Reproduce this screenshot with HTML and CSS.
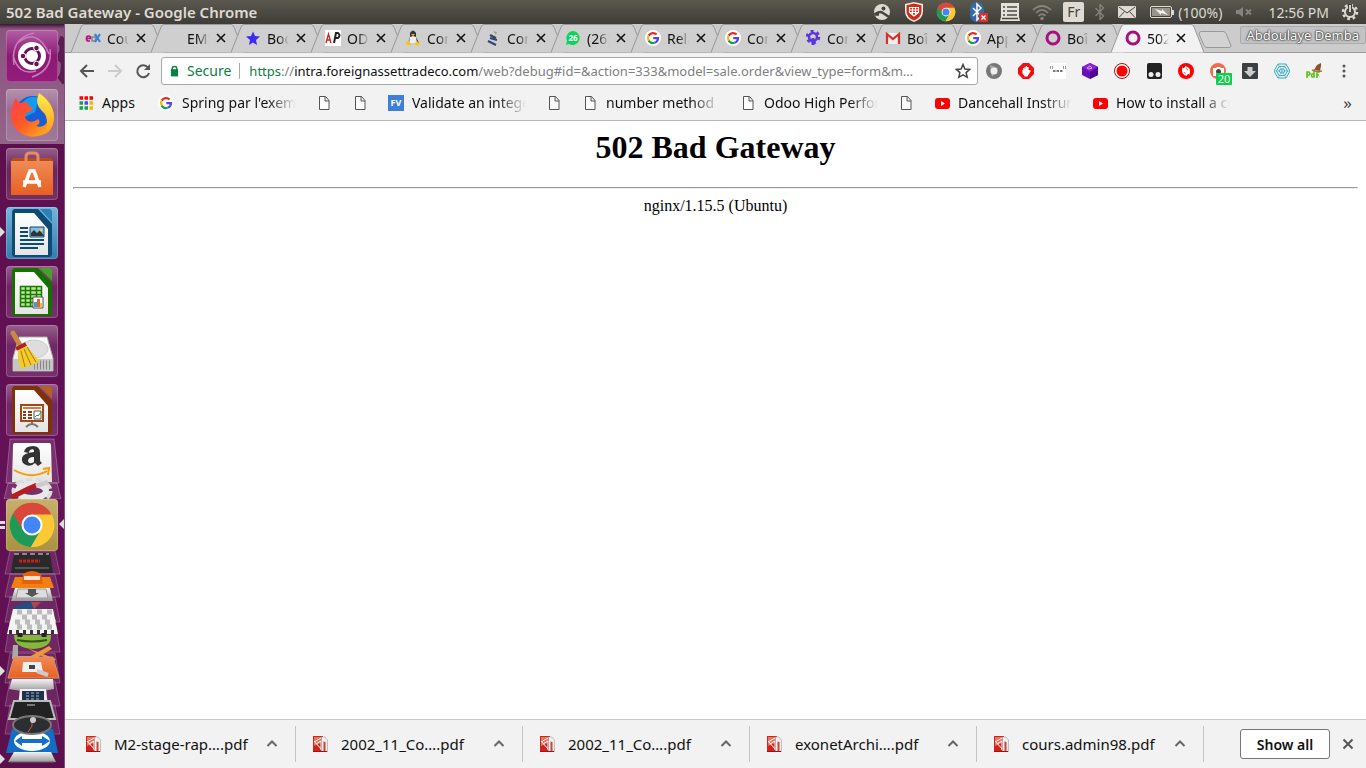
FILE: index.html
```html
<!DOCTYPE html>
<html lang="en">
<head>
<meta charset="utf-8">
<title>502 Bad Gateway</title>
<link rel="stylesheet" href="styles.css">
</head>
<body>
<svg class="sprite" width="0" height="0" aria-hidden="true">
  <linearGradient id="paper" x2="0" y2="1"><stop stop-color="#fff"/><stop offset="1" stop-color="#e4e4e4"/></linearGradient>
  <linearGradient id="silver" x2="0" y2="1"><stop stop-color="#f4f4f4"/><stop offset="1" stop-color="#999"/></linearGradient>
  <linearGradient id="orange" x2="0" y2="1"><stop stop-color="#f08a55"/><stop offset="1" stop-color="#e8601f"/></linearGradient>
  <linearGradient id="fire" x2="1" y2="1"><stop stop-color="#ff3a50"/><stop offset=".5" stop-color="#ff5a26"/><stop offset="1" stop-color="#ffc21e"/></linearGradient>
  <linearGradient id="flame" x2="0" y2="1"><stop stop-color="#fff04a"/><stop offset="1" stop-color="#ff9a1a"/></linearGradient>
  <symbol id="google" viewBox="0 0 16 16"><circle cx="8" cy="8" r="8" fill="#fff"/><g fill="none" stroke-width="2.200"><path d="M11.600 4.600A5 5 0 0 0 3.700 5.600" stroke="#ea2a1f"/><path d="M3.700 5.600A5 5 0 0 0 3.700 10.500" stroke="#fbb606"/><path d="M3.700 10.500A5 5 0 0 0 9.500 12.800" stroke="#13a052"/><path d="M9.500 12.800A5 5 0 0 0 13 8.200H8.300" stroke="#4f46f5"/></g></symbol>
  <symbol id="doc" viewBox="0 0 16 16"><path d="M3.500 1.500h6l3.500 4v9H3.500zM9 1.500V6h4" fill="#fff" stroke="#555"/></symbol>
  <symbol id="youtube" viewBox="0 0 16 16"><rect x="1" y="3" width="15" height="11" rx="3" fill="#f00"/><path d="M7 6l4 2.500L7 11z" fill="#fff"/></symbol>
  <symbol id="ring" viewBox="0 0 16 16"><circle cx="8" cy="8" r="6" fill="none" stroke="#a6117f" stroke-width="3"/></symbol>
  <symbol id="close" viewBox="0 0 12 12"><path d="M2 2l8 8M10 2l-8 8" stroke="currentColor" stroke-width="1.600" fill="none"/></symbol>
  <symbol id="tabshape" viewBox="0 0 94 29"><path d="M0 28.500L10 3Q11 .5 13 .5H80Q82 .5 83 3L93 28.500" fill="var(--tab)" stroke="#999"/></symbol>
  <symbol id="chrome" viewBox="0 0 48 48"><circle cx="24" cy="24" r="22" fill="#fcc934"/><path d="M24 24L5 12.500A22 22 0 0 0 23 46L33 29z" fill="#1d9a58"/><path d="M24 13H43.500A22 22 0 0 1 23 46L33 29z" fill="#fcc934"/><path d="M5 12.500A22 22 0 0 1 43.500 13.500H24L15 29z" fill="#d9483b"/><circle cx="24" cy="24" r="10.500" fill="#fff"/><circle cx="24" cy="24" r="8.500" fill="#4285f4"/></symbol>
  <symbol id="pdf" viewBox="0 0 16 16"><path d="M0 0h10v16H0z" fill="#d32219"/><path d="M1 1h7v6l-7 3z" fill="#f0715c"/><path d="M1 5l8 9M1 6l7-4M3 8l5-3v9" stroke="#fff" fill="none"/><path d="M8.500 1h3.500l2.500 3v12h-6z" fill="#eee" stroke="#aaa" stroke-width=".7"/><path d="M10.500 5.500l2 .5v9h-2z" fill="#c43"/><path d="M0 15.500h14" stroke="#a30f19"/></symbol>
  <symbol id="up" viewBox="0 0 12 12"><path d="M1.500 8L6 3.500 10.500 8" fill="none" stroke="#666" stroke-width="2"/></symbol>
  <symbol id="bluetooth" viewBox="0 0 12 16"><path d="M1.500 4l8 8L6 15.500V.5L9.500 4l-8 8" fill="none" stroke="currentColor" stroke-width="1.400"/></symbol>
</svg>

<header class="menubar">
  <h2 class="window-title">502 Bad Gateway - Google Chrome</h2>
  <div class="indicators">
    <svg class="ind" viewBox="0 0 20 20"><circle cx="10" cy="10" r="8" fill="#dedad2"/><path d="M2.500 12.500q5-4 8.500-1.500l6 4M3 12.500h4" stroke="#45443f" stroke-width="2.500" fill="none"/><circle cx="11.500" cy="6.500" r="2" fill="#45443f"/></svg>
    <svg class="ind" viewBox="0 0 20 20"><path d="M10 0l9 2v7q0 8-9 11Q1 17 1 9V2z" fill="#eee"/><path d="M10 1.500l7.500 1.700V9q0 6.500-7.500 9.500Q2.500 15.500 2.500 9V3.200z" fill="#cf2d16"/><path d="M5.500 5.500h9v5l-4.500 3.500-4.500-3.500zM5.500 8h9M5.500 10.500h9M8.500 5.500v7M11.500 5.500v7" stroke="#fff" fill="none" stroke-width="1.200"/></svg>
    <svg class="ind"><use href="#chrome"/></svg>
    <svg class="ind" viewBox="0 0 20 20"><rect x="2" width="14" height="20" rx="7" fill="#356aa8"/><path d="M5 6l8 8-4 4V2l4 4-8 8" stroke="#fff" stroke-width="1.500" fill="none"/><rect x="11" y="11" width="9" height="9" rx="1" fill="#e52d27"/><path d="M13.500 13.500l4 4m0-4l-4 4" stroke="#fff" stroke-width="1.300"/></svg>
    <svg class="ind" viewBox="0 0 20 20"><path d="M1 1h18v14l1 4H0l1-4z" fill="#e4e1da"/><path d="M3 5h2m2 0h10M3 9h2m2 0h10M3 13h2m2 0h10M2 16.500h16" stroke="#4b4a45" stroke-width="1.500"/></svg>
    <svg class="ind" viewBox="0 0 20 20"><g fill="none" stroke="#85837b" stroke-width="1.700"><path d="M1 8q9-8 18 0M4 11q6-6 12 0M6.500 14q3.500-3.500 7 0"/></g><circle cx="10" cy="16.500" r="1.800" fill="#85837b"/></svg>
    <span class="lang">Fr</span>
    <svg class="bt"><use href="#bluetooth"/></svg>
    <svg class="mail" viewBox="0 0 18 12"><rect width="18" height="12" rx="1" fill="#dfdbd2"/><path d="M1 1l8 6 8-6M1 11.500l5.500-6m10.500 6l-5.500-6" stroke="#45443f" fill="none"/></svg>
    <svg class="battery" viewBox="0 0 25 14"><rect x=".5" y="1.500" width="21" height="11" rx="1.500" fill="none" stroke="#dfdbd2"/><path d="M23 5v5" stroke="#dfdbd2" stroke-width="2"/><rect x="2" y="3" width="18" height="8" fill="#96948c"/><path d="M5 4l7 2V4l6 6-7-2v2z" fill="#f4f1ea"/></svg>
    <span>(100%)</span>
    <svg class="mute" viewBox="0 0 20 16"><path d="M2 6h3l4-3v10l-4-3H2z" fill="#85837b"/><path d="M12 5.500l5 5m0-5l-5 5" stroke="#85837b" stroke-width="1.800"/></svg>
    <time>12:56 PM</time>
    <svg class="power" viewBox="0 0 18 18"><circle cx="9" cy="9" r="5" fill="none" stroke="#dfdbd2" stroke-width="2"/><circle cx="9" cy="9" r="7" fill="none" stroke="#dfdbd2" stroke-width="2.500" stroke-dasharray="2.700 2.800"/><path d="M9 1v8" stroke="#45443f" stroke-width="4"/><path d="M9 2v7" stroke="#dfdbd2" stroke-width="1.800"/></svg>
  </div>
</header>

<div class="desktop">
  <nav class="launcher" aria-label="Launcher">
    <svg class="swirl" viewBox="0 0 65 120"><path d="M59 16q6 2 5 9 0 6-4 8 7 2 5 12 0 8-5 12" fill="none" stroke="#5b1d51" stroke-width="9"/></svg>
    <button class="tile dash" aria-label="Dash"><svg viewBox="0 0 52 52"><g fill="none" stroke="#c87dba" stroke-width="1.500"><path d="M8 35Q4 8 28 3M13 12Q32-2 43 24M44 19Q47 40 26 47M30 41Q12 46 7 25"/></g><circle cx="26" cy="26" r="14" fill="#fff"/><circle cx="26" cy="26" r="7.500" fill="none" stroke="#651553" stroke-width="3"/><g fill="#651553" stroke="#fff"><circle cx="17" cy="26" r="2.800"/><circle cx="30.500" cy="18" r="2.800"/><circle cx="30.500" cy="34" r="2.800"/></g></svg></button>
    <button class="tile" aria-label="Firefox"><svg viewBox="0 0 52 52"><circle cx="27" cy="25" r="18" fill="#185ed8"/><path d="M17 13q6-7 16-4l-4 14-10 5z" fill="#119cf0"/><path d="M10 9q1 4 4 5 3-1 7-1l2 4 4 2-2 3-5 2-1 5 3 3q6 2 10-2 4 4-2 7 10 3 13-8 1-8-6-13Q31 9 33 4q15 10 15 24 0 14-12 18-13 5-24-4Q2 33 6 20q1-7 4-11" fill="url(#fire)"/><path d="M33 4q15 10 15 25-1 12-9 16 5-17-3-23-8-7-3-18" fill="url(#flame)"/></svg></button>
    <button class="tile" aria-label="Software"><svg viewBox="0 0 52 52"><path d="M5 13h42v34H5z" fill="url(#orange)"/><path d="M5 13h42l-2-3H7z" fill="#bb4c1c"/><path d="M20 18V9q0-4 4-4h4q4 0 4 4v9" fill="none" stroke="#e88b61" stroke-width="3"/><path d="M18 39l6-16h4l6 16M17 34h18" fill="none" stroke="#fff" stroke-width="3.500"/></svg></button>
    <button class="tile writer" aria-label="Writer"><svg viewBox="0 0 52 52"><path d="M8 2h24l14 15v31l-2 2H8l-2-2V4z" fill="#0c4b76"/><path d="M34 2h10l2 2v11z" fill="#2e80b4"/><path d="M9 6h19l14 16v26H9z" fill="url(#paper)"/><path d="M14 21h8m-8 4h8m-8 4h8m-8 4h24m-24 4h24m-24 4h18" stroke="#0c4b76" stroke-width="2"/><path d="M24 20h14v10H24z" fill="#7ec0ec" stroke="#0c4b76"/><path d="M25 29v-3l3-3 3 3 3-3 4 6z" fill="#333"/><circle cx="35" cy="23" r="1.500" fill="#fc3"/></svg></button>
    <button class="tile" aria-label="Calc"><svg viewBox="0 0 52 52"><path d="M8 2h24l14 15v31l-2 2H8l-2-2V4z" fill="#167000"/><path d="M34 2h10l2 2v11z" fill="#46a329"/><path d="M9 6h19l14 16v26H9z" fill="url(#paper)"/><path d="M14.500 20.500h21v20h-21zM14.500 24.500h21m-21 4h21m-21 4h21m-21 4h21m-16-16v20m5-20v20m6-20v20" fill="#bce69d" stroke="#187a00" stroke-width="1.500"/><path d="M27 31h10v11H27z" fill="#fff" stroke="#555"/><path d="M28 36h3v5h-3z" fill="#3b9cdf"/><path d="M31 33h3v8h-3z" fill="#e66526"/><path d="M34 37h2v4h-2z" fill="#f4c22b"/></svg></button>
    <button class="tile" aria-label="Disk cleaner"><svg viewBox="0 0 52 52"><path d="M13 12h28l6 21v13H7V33z" fill="url(#paper)" stroke="#aaa"/><ellipse cx="28" cy="24" rx="14" ry="9" fill="#ddd" stroke="#ccc"/><path d="M7 34h40v12H7z" fill="#c5c5c5"/><path d="M28 37h17m-17 3h17m-17 3h17" stroke="#888" stroke-dasharray="1 2" stroke-width="3"/><path d="M7 8l8 14" stroke="#c98943" stroke-width="5" stroke-linecap="round"/><path d="M12 25l8-5 14 17-19 7q-4-8-3-19" fill="#f3cc29"/><path d="M15 26l4 16m-1-18l7 16m-4-18l9 15" stroke="#a57b12" fill="none"/><path d="M10 24l10-5" stroke="#b32027" stroke-width="4"/></svg></button>
    <button class="tile" aria-label="Impress"><svg viewBox="0 0 52 52"><path d="M8 2h24l14 15v31l-2 2H8l-2-2V4z" fill="#7e310b"/><path d="M34 2h10l2 2v11z" fill="#b56026"/><path d="M9 6h19l14 16v26H9z" fill="url(#paper)"/><path d="M15 21h22v16H15z" fill="#fff" stroke="#a54617" stroke-width="2"/><path d="M17 24h18" stroke="#e5763d" stroke-width="2"/><path d="M17 28h3m-3 3h3m-3 3h3m2-6h4m-4 3h4m-4 3h4" stroke="#8b3c18" stroke-width="2"/><path d="M28 27h7v8h-7z" fill="#fff" stroke="#555"/><path d="M29 33l2-2 1 1 3-4" stroke="#28a42b" fill="none"/><path d="M26 38v2m-6 3q6-6 12 0" stroke="#777" stroke-width="2" fill="none"/></svg></button>
    <button class="fold amazon" aria-label="Amazon and Settings"><svg viewBox="0 0 65 62"><path d="M10 2h44l5 44H6z" fill="#fff2" stroke="#fff4"/><path d="M13 8q0-2 2-2h34q2 0 2 2l1 37H12z" fill="url(#paper)"/><path d="M24 15q1-6 9-6 7 0 7 7v7q0 2 2 3l-4 3-3-3q-4 4-9 2-5-2-4-7 1-5 12-6v-1q0-3-4-1-1 1-1 3zm10 5q-6 0-6 4 1 4 6 1z" fill="#333"/><path d="M14 33q17 10 33 1m-4-2l6-1-1 7" fill="none" stroke="#ff9900" stroke-width="2"/><path d="M8 46h49l4 16H4z" fill="#fff2" stroke="#fff4"/><ellipse cx="32" cy="54" rx="16" ry="9" fill="none" stroke="#ddd" stroke-width="9" stroke-dasharray="6 3"/><ellipse cx="32" cy="54" rx="14" ry="7" fill="none" stroke="#e8e8e8" stroke-width="6"/><path d="M12 60l16-8 9-4" stroke="#b91c1c" stroke-width="5"/><path d="M36 49l12-4" stroke="#ccc" stroke-width="5"/></svg></button>
    <button class="tile active" aria-label="Google Chrome"><svg viewBox="0 0 52 52"><use href="#chrome" x="2" y="2" width="48" height="48"/></svg></button>
    <button class="fold" aria-label="Folded applications"><svg viewBox="0 0 65 217">
      <g fill="#ffffff18" stroke="#ffffff38"><path d="M10 0h45l5 23H5zM10 23h45l5 23H5zM10 46h45l5 25H5zM10 71h45l5 30H5zM10 102h45l5 30H5zM10 130h45l5 25H5zM10 154h45l5 29H5z"/></g>
      <path d="M14 2h36l3 20H11z" fill="#292929"/><path d="M14 3h35" stroke="#888" stroke-width="2" stroke-dasharray="5 3"/><path d="M19 10h21" stroke="#c92016" stroke-width="3" stroke-dasharray="3 1"/><path d="M15 17h34" stroke="#555" stroke-width="2"/>
      <path d="M15 26h35l4 11H11z" fill="#f08011"/><path d="M23 23q9-6 18 0l2 10H22z" fill="#e8620e"/><path d="M24 25h16v4H24z" fill="#f7e1ca"/>
      <path d="M15 37h35l3 13H11z" fill="url(#silver)"/><path d="M18 38h28l2 9H16z" fill="#ddd" stroke="#999"/><path d="M28 38h8v4h3l-7 4-7-4h3z" fill="#555"/>
      <path d="M13 58q5-7 17-7h7l-6 10-18 5z" fill="#284b80"/><path d="M31 51h10l-7 7z" fill="#a84a48"/>
      <path d="M13 58h40l5 25H7z" fill="#f4f4f4"/><g stroke="#bbb" stroke-width="5" stroke-dasharray="5 5"><path d="M17 61h35M22 66h30M15 71h41M17 76h38"/></g><path d="M9 81h47" stroke="#333" stroke-width="4" stroke-dasharray="3 4"/>
      <path d="M14 84h37q1 13-18 14-19-1-19-14" fill="#83b83b"/><path d="M17 89q15 3 30 0" fill="none" stroke="#36501c" stroke-width="2"/><path d="M20 82v4m24-4v4" stroke="#222" stroke-width="5"/>
      <path d="M13 94h5v11h14l2 3H12z" fill="#aaa"/><path d="M27 97l29 11-3 3zM27 107l22-12 3 3-17 10z" fill="#ee963e"/>
      <path d="M14 106h39l6 21H8z" fill="url(#orange)" stroke="#d6946e"/><path d="M23 111h18l2 10H22z" fill="#eee"/><path d="M29 114h6v4h-6z" fill="#444"/><path d="M37 120l11 4" stroke="#ccc" stroke-width="4"/>
      <path d="M12 128h41l1 10q-21 5-45 0z" fill="url(#silver)"/><path d="M20 138h26l2 17H18z" fill="#eee"/><path d="M22 140h22v10H22z" fill="#203249"/><path d="M26 142h14m-14 3h14m-14 3h14" stroke="#9fbbd8" stroke-dasharray="3 2"/>
      <path d="M14 150h36l5 18H9z" fill="#222" stroke="#bbb" stroke-width="2"/><path d="M27 154h8" stroke="#777" stroke-width="2"/>
      <path d="M12 178h41l5 24H6z" fill="#126ec5"/>
      <ellipse cx="32" cy="190" rx="18" ry="10" fill="#fff"/><path d="M15 190l7-5v3h20v-3l8 5-8 5v-3H22v3z" fill="#1670c8"/>
      <ellipse cx="32" cy="174" rx="19" ry="9" fill="#2c2f32" stroke="#777" stroke-width="2"/><path d="M32 170v5l-4 6" stroke="#d65a32" fill="none"/><circle cx="33" cy="169" r="3" fill="#ccc"/>
      <path d="M14 201h37l5 10H8z" fill="url(#silver)"/><path d="M9 211h46" stroke="#666"/>
    </svg></button>
    <svg class="marks" viewBox="0 0 64 744" aria-hidden="true"><path d="M0 203l5 5-5 5zM0 497h5v3H0zM0 502h5v3H0zM64 495l-5 5 5 5zM0 642l5 5-5 5zM0 730l5 5-5 5z" fill="#ddd"/></svg>
  </nav>

  <main class="browser">
    <div class="tabstrip">
      <div class="tab"><svg class="shape"><use href="#tabshape"/></svg><svg class="icon" viewBox="0 0 16 16"><path d="M1.500 8.500h4Q5.500 6 3.500 6T1.500 8.500 3.500 11H5" fill="none" stroke="#b3107c" stroke-width="1.700"/><path d="M10.500 4v8M10.500 7H7v4h3.500" stroke="#888" fill="none" stroke-width="1.500"/><path d="M10 4l5 8m0-8l-5 8" stroke="#2b83de" stroke-width="2"/></svg><a href="#">Courses</a><button aria-label="Close tab"><svg><use href="#close"/></svg></button></div>
      <div class="tab"><svg class="shape"><use href="#tabshape"/></svg><span class="icon"></span><a href="#">EMS</a><button aria-label="Close tab"><svg><use href="#close"/></svg></button></div>
      <div class="tab"><svg class="shape"><use href="#tabshape"/></svg><svg class="icon" viewBox="0 0 16 16"><path d="M8 1.500l2 4.500 5 .5-4 3.500 1 5-4-2.500L4 15l1-5-4-3.500L6 6z" fill="#3c2bef"/></svg><a href="#">Book</a><button aria-label="Close tab"><svg><use href="#close"/></svg></button></div>
      <div class="tab"><svg class="shape"><use href="#tabshape"/></svg><svg class="icon" viewBox="0 0 16 16"><path d="M0 0h16v16H0z" fill="#fff"/><path d="M1 13L3.500 4 6 13M2 10h3" stroke="#d3201c" fill="none" stroke-width="1.300"/><path d="M9 13l2-10h2q3 2 0 5h-3" stroke="#222" fill="none" stroke-width="2"/></svg><a href="#">ODOO</a><button aria-label="Close tab"><svg><use href="#close"/></svg></button></div>
      <div class="tab"><svg class="shape"><use href="#tabshape"/></svg><svg class="icon" viewBox="0 0 16 16"><path d="M5 3q3-5 6 0v4l3 6H3l2-6z" fill="#333"/><path d="M5 7l3-1 3 1 1 6H4z" fill="#eee"/><path d="M6 4h4L8 6zM1 12l3-1 3 4H1zM9 14l3-3 3 3-2 2z" fill="#f7c51e"/></svg><a href="#">Comm</a><button aria-label="Close tab"><svg><use href="#close"/></svg></button></div>
      <div class="tab"><svg class="shape"><use href="#tabshape"/></svg><svg class="icon" viewBox="0 0 16 16"><path d="M5 8l7 2M5 5l6 3M3 11l8 4" stroke="#2e4771" stroke-width="2"/><path d="M8 1l4 1-1 3z" fill="#b7a172"/></svg><a href="#">Conn</a><button aria-label="Close tab"><svg><use href="#close"/></svg></button></div>
      <div class="tab"><svg class="shape"><use href="#tabshape"/></svg><svg class="icon" viewBox="0 0 16 16"><path d="M8 1a7 7 0 1 1-4 13l-3 1 1-4A7 7 0 0 1 8 1" fill="#0bd65a"/><text x="8" y="11" class="badge-text">26</text></svg><a href="#">(26) W</a><button aria-label="Close tab"><svg><use href="#close"/></svg></button></div>
      <div class="tab"><svg class="shape"><use href="#tabshape"/></svg><svg class="icon"><use href="#google"/></svg><a href="#">Rela</a><button aria-label="Close tab"><svg><use href="#close"/></svg></button></div>
      <div class="tab"><svg class="shape"><use href="#tabshape"/></svg><svg class="icon"><use href="#google"/></svg><a href="#">Comm</a><button aria-label="Close tab"><svg><use href="#close"/></svg></button></div>
      <div class="tab"><svg class="shape"><use href="#tabshape"/></svg><svg class="icon" viewBox="0 0 16 16"><circle cx="8" cy="7" r="4" fill="none" stroke="#5a35e0" stroke-width="2.500"/><circle cx="8" cy="7" r="6" fill="none" stroke="#5a35e0" stroke-width="2.500" stroke-dasharray="3 3.280"/><path d="M8 8v7" stroke="#5a35e0" stroke-width="3"/></svg><a href="#">Conf</a><button aria-label="Close tab"><svg><use href="#close"/></svg></button></div>
      <div class="tab"><svg class="shape"><use href="#tabshape"/></svg><svg class="icon" viewBox="0 0 16 16"><path d="M1 3h14v11H1z" fill="#eee"/><path d="M2 14V4l6 5 6-5v10" fill="none" stroke="#d93025" stroke-width="2.200"/></svg><a href="#">Boîte</a><button aria-label="Close tab"><svg><use href="#close"/></svg></button></div>
      <div class="tab"><svg class="shape"><use href="#tabshape"/></svg><svg class="icon"><use href="#google"/></svg><a href="#">Appl</a><button aria-label="Close tab"><svg><use href="#close"/></svg></button></div>
      <div class="tab"><svg class="shape"><use href="#tabshape"/></svg><svg class="icon"><use href="#ring"/></svg><a href="#">Boîte</a><button aria-label="Close tab"><svg><use href="#close"/></svg></button></div>
      <div class="tab current"><svg class="shape"><use href="#tabshape"/></svg><svg class="icon"><use href="#ring"/></svg><a href="#">502 Bad</a><button aria-label="Close tab"><svg><use href="#close"/></svg></button></div>
      <button class="newtab" aria-label="New tab"><svg viewBox="0 0 36 18"><path d="M4 .5h22q2 0 3 2l5 12q0 2-2 2H10q-2 0-3-2L2 3Q2 .5 4 .5" fill="#d3d3d3" stroke="#999"/></svg></button>
      <button class="profile">Abdoulaye Demba</button>
    </div>

    <div class="toolbar">
      <button class="nav" aria-label="Back"><svg viewBox="0 0 16 16"><path d="M15 8H2M8 2L2 8l6 6" fill="none" stroke="#555" stroke-width="2"/></svg></button>
      <button class="nav" aria-label="Forward"><svg viewBox="0 0 16 16"><path d="M1 8h13M8 2l6 6-6 6" fill="none" stroke="#ccc" stroke-width="2"/></svg></button>
      <button class="nav" aria-label="Reload"><svg viewBox="0 0 16 16"><path d="M13 4.500A6 6 0 1 0 14 10" fill="none" stroke="#555" stroke-width="2"/><path d="M15 1v6H9z" fill="#555"/></svg></button>
      <div class="omnibox">
        <svg class="lock" viewBox="0 0 10 12"><path d="M1 4h8v8H1z" fill="#0b8043"/><path d="M2.500 5V3Q2.500 1 5 1t2.500 2v2" fill="none" stroke="#0b8043" stroke-width="1.500"/></svg>
        <span class="secure">Secure</span>
        <div class="url" role="textbox" aria-label="Address"><span class="scheme">https</span>://<b>intra.foreignassettradeco.com</b>/web?debug#id=&amp;action=333&amp;model=sale.order&amp;view_type=form&amp;m…</div>
        <button class="nav" aria-label="Bookmark"><svg viewBox="0 0 16 16"><path d="M8 1.500l1.900 4.500 4.800.4-3.600 3.200 1.100 4.700L8 11.800l-4.200 2.500 1.100-4.700-3.600-3.200L6.100 6z" fill="none" stroke="#444" stroke-width="1.500"/></svg></button>
      </div>
      <div class="extensions">
        <button aria-label="Debugger"><svg viewBox="0 0 16 16"><circle cx="8" cy="8" r="8" fill="#777"/><path d="M4 2l8 3-6 9z" fill="#aaa"/><circle cx="8" cy="8" r="3.500" fill="#eee"/></svg></button>
        <button aria-label="AdBlock"><svg viewBox="0 0 16 16"><path d="M5 0h6l5 5v6l-5 5H5l-5-5V5z" fill="#ee1111"/><path d="M5 7v3l2 3h2l3-5-1.500-.5-.5 1V4M8.500 8V3M7 8V4M5.500 8V5" fill="#fff" stroke="#fff" stroke-width="1.200"/></svg></button>
        <button aria-label="Password"><svg viewBox="0 0 16 16"><path d="M0 0h16v16H0z" fill="#fff"/><path d="M.5 3v3m2-3v3m11-3v3m2-3v3" stroke="#999"/><path d="M3 8h2.500m1 0H9m1 0h2.500" stroke="#777" stroke-width="2"/></svg></button>
        <button aria-label="Cube"><svg viewBox="0 0 16 16"><path d="M8 0l8 4v8l-8 4-8-4V4z" fill="#6a0eb7"/><path d="M8 0l8 4-8 5-8-5z" fill="#8a25cf"/><path d="M8 9v7l8-4V4z" fill="#4d0792"/><path d="M5 5l3-2 2 2-3 1z" stroke="#dca8ff" fill="none"/></svg></button>
        <button aria-label="Recorder"><svg viewBox="0 0 16 16"><circle cx="8" cy="8" r="7.500" fill="#fff" stroke="#b30b0b"/><circle cx="8" cy="8" r="5.500" fill="#f00"/></svg></button>
        <button aria-label="Tampermonkey"><svg viewBox="0 0 16 16"><rect x="1" width="15" height="16" rx="2" fill="#222"/><circle cx="5" cy="11.500" r="2.500" fill="#eee"/><circle cx="12" cy="11.500" r="2.500" fill="#eee"/></svg></button>
        <button aria-label="Refresh extension"><svg viewBox="0 0 16 16"><circle cx="8" cy="8" r="8" fill="#f00"/><path d="M9 12Q4 11 5 6l5 5M7 4q5 1 4 6L6 5" stroke="#fff" stroke-width="1.800" fill="none"/></svg></button>
        <button aria-label="Capture, 20"><svg viewBox="0 0 16 16"><circle cx="8" cy="8" r="8" fill="#f36b49"/><path d="M3 5h3l1-1h3l1 1h3v8H3z" fill="#fff"/><circle cx="8.500" cy="8.500" r="2.500" fill="#444"/></svg><span class="count">20</span></button>
        <button aria-label="Downloader"><svg viewBox="0 0 16 16"><rect width="16" height="16" rx="1" fill="#3c3f42"/><path d="M5.500 4h5v4H14l-6 6-6-6h3.500z" fill="#ccc"/></svg></button>
        <button aria-label="Web"><svg viewBox="0 0 16 16"><g fill="none" stroke="#32a8c3"><path d="M4 1h8l4 7-4 7H4L0 8zM5 3.500h6L13.500 8 11 12.500H5L2.500 8zM6.500 6h3L11 8l-1.500 2h-3L5 8z"/><path d="M4 1l8 14M12 1L4 15M0 8h16" stroke-width=".5"/></g></svg></button>
        <button aria-label="Pdf"><svg viewBox="0 0 16 16"><path d="M1 15V9h2q2 2 0 3H1m7-5v7H6q-1-2 0-3h2m3 4V9h3m-3 3h2" stroke="#54c714" stroke-width="1.600" fill="none"/><path d="M8 7l3-5 4-2v3l-1 5-4-1z" fill="#8c512c"/><path d="M6 7q4 2 10 1" stroke="#a9713a" stroke-width="1.500" fill="none"/></svg></button>
      </div>
      <button class="nav menu" aria-label="Menu"><svg viewBox="0 0 16 16"><g fill="#555"><circle cx="8" cy="3" r="1.500"/><circle cx="8" cy="8" r="1.500"/><circle cx="8" cy="13" r="1.500"/></g></svg></button>
    </div>

    <nav class="bookmarks" aria-label="Bookmarks">
      <a href="#"><svg class="icon" viewBox="0 0 16 16"><g stroke-width="3.500" stroke-dasharray="3.500 1.500"><path d="M1.500 3h14" stroke="#f00"/><path d="M1.500 8h5" stroke="#13a052"/><path d="M6.500 8h5" stroke="#4f46f5"/><path d="M11.500 8h4" stroke="#f5b800"/><path d="M1.500 13h9" stroke="#13a052"/><path d="M11.500 13h4" stroke="#f5b800"/></g></svg><span class="apps">Apps</span></a>
      <a href="#"><svg class="icon"><use href="#google"/></svg><span>Spring par l'exemple</span></a>
      <a href="#" aria-label="Page"><svg class="icon"><use href="#doc"/></svg></a>
      <a href="#" aria-label="Page"><svg class="icon"><use href="#doc"/></svg></a>
      <a href="#"><i class="icon fv">FV</i><span>Validate an integer</span></a>
      <a href="#" aria-label="Page"><svg class="icon"><use href="#doc"/></svg></a>
      <a href="#"><svg class="icon"><use href="#doc"/></svg><span>number method</span></a>
      <a href="#"><svg class="icon"><use href="#doc"/></svg><span>Odoo High Performance</span></a>
      <a href="#" aria-label="Page"><svg class="icon"><use href="#doc"/></svg></a>
      <a href="#"><svg class="icon"><use href="#youtube"/></svg><span>Dancehall Instrumental</span></a>
      <a href="#"><svg class="icon"><use href="#youtube"/></svg><span>How to install a cert</span></a>
      <button class="more" aria-label="More bookmarks">»</button>
    </nav>

    <section class="page">
      <h1>502 Bad Gateway</h1>
      <hr>
      <p>nginx/1.15.5 (Ubuntu)</p>
    </section>

    <footer class="downloads">
      <button class="download"><svg class="icon"><use href="#pdf"/></svg><span>M2-stage-rap….pdf</span><svg class="caret"><use href="#up"/></svg></button>
      <button class="download"><svg class="icon"><use href="#pdf"/></svg><span>2002_11_Co….pdf</span><svg class="caret"><use href="#up"/></svg></button>
      <button class="download"><svg class="icon"><use href="#pdf"/></svg><span>2002_11_Co….pdf</span><svg class="caret"><use href="#up"/></svg></button>
      <button class="download"><svg class="icon"><use href="#pdf"/></svg><span>exonetArchi….pdf</span><svg class="caret"><use href="#up"/></svg></button>
      <button class="download"><svg class="icon"><use href="#pdf"/></svg><span>cours.admin98.pdf</span><svg class="caret"><use href="#up"/></svg></button>
      <button class="showall">Show all</button>
      <button class="dismiss" aria-label="Close downloads bar"><svg viewBox="0 0 12 12"><path d="M1.500 1.500l9 9m0-9l-9 9" stroke="#555" stroke-width="2"/></svg></button>
    </footer>
  </main>
</div>
</body>
</html>
```
FILE: styles.css
```css
* { box-sizing: border-box; }

body {
  margin: 0;
  height: 100vh;
  display: flex;
  flex-direction: column;
  overflow: hidden;
  font-family: "Noto Sans", "Open Sans", sans-serif;
  font-size: 14px;
  color: #111;
}

svg { display: block; }
.sprite { position: absolute; }
a { color: inherit; text-decoration: none; }
button {
  margin: 0;
  padding: 0;
  border: 0;
  background: none;
  font: inherit;
  color: inherit;
  flex: none;
}

/* Top panel */
.menubar {
  flex: none;
  height: 24px;
  padding: 0 7px 0 6px;
  display: flex;
  align-items: center;
  justify-content: space-between;
  background: linear-gradient(#5b594f, #3d3c37);
  color: #dfdbd2;
}
.window-title { margin: 0; font-size: 15px; line-height: 20px; font-weight: 600; }
.indicators { display: flex; align-items: center; }
.ind { width: 20px; height: 20px; margin-right: 12px; }
.lang {
  width: 21px;
  height: 20px;
  margin: 0 10px 0 -1px;
  border-radius: 2px;
  background: #dfdbd2;
  color: #45443f;
  line-height: 20px;
  text-align: center;
}
.bt { width: 12px; height: 16px; margin-right: 12px; color: #85837b; }
.mail { width: 18px; height: 12px; margin-right: 14px; }
.battery { width: 25px; height: 14px; margin-right: 3px; }
.mute { width: 20px; height: 16px; margin: 0 14px 0 12px; }
.power { width: 18px; height: 18px; margin-left: 12px; }

.desktop { flex: 1; min-height: 0; display: flex; }

/* Launcher */
.launcher {
  position: relative;
  flex: none;
  width: 65px;
  padding-top: 6px;
  display: flex;
  flex-direction: column;
  align-items: flex-start;
  overflow: hidden;
  border-right: 1px solid #8b4a80;
  background: linear-gradient(#3f1237 0, #8a547f 5px, #92648a 120px, #5c0f4d 120px, #651158 60%, #5c0f4d);
}
.swirl { position: absolute; top: 0; left: 0; width: 65px; height: 120px; }
.marks { position: absolute; top: 0; left: 0; width: 64px; height: 744px; pointer-events: none; }
.tile {
  position: relative;
  width: 52px;
  height: 52px;
  margin: 0 6px 7px;
  border-radius: 4px;
  background: linear-gradient(#ffffff55, #ffffff18 40%, #ffffff22);
  box-shadow: inset 0 0 0 1px #ffffff33;
}
.tile svg { width: 52px; height: 52px; }
.dash { background: linear-gradient(#b25fa4, #8b1974 50%, #951c7c); }
.writer { background: linear-gradient(#75b5da, #347cac); }
.active { margin-bottom: 0; background: linear-gradient(#c6b06d, #aa9142); }
.fold { width: 65px; }
.fold svg { width: 65px; height: 217px; }
.amazon { margin-top: -6px; }
.amazon svg { height: 62px; }
.amazon + .tile { z-index: 1; }

/* Browser */
.browser {
  flex: 1;
  min-width: 0;
  display: flex;
  flex-direction: column;
  background: #f2f2f2;
}
.tabstrip {
  flex: none;
  height: 29px;
  padding-left: 6px;
  display: flex;
  background: linear-gradient(#ccc 28px, #999 28px);
}
.tab {
  --tab: #cfcfcf;
  position: relative;
  flex: none;
  width: 94px;
  margin-right: -14px;
  padding: 0 0 1px 14px;
  display: flex;
  align-items: center;
  gap: 6px;
}
.current { --tab: #f2f2f2; z-index: 1; }
.shape { position: absolute; top: 0; left: 0; width: 94px; height: 29px; }
.icon { flex: none; width: 16px; height: 16px; }
.tab .icon, .tab a, .tab button { position: relative; }
.tab a {
  width: 22px;
  overflow: hidden;
  white-space: nowrap;
  -webkit-mask-image: linear-gradient(90deg, #000 50%, transparent);
  mask-image: linear-gradient(90deg, #000 50%, transparent);
}
.tab button svg { width: 12px; height: 12px; }
.badge-text { font-size: 8px; font-weight: 700; fill: #fff; text-anchor: middle; }
.newtab { margin: 7px 0 0 6px; align-self: flex-start; }
.newtab svg { width: 36px; height: 18px; }
.profile {
  height: 18px;
  margin: 2px 0 0 auto;
  padding: 0 6px;
  border: 1px solid #aaa;
  border-radius: 2px;
  background: #c3c3c3;
  color: #fff;
  font-size: 13px;
  line-height: 14px;
  text-shadow: 0 0 2px #333, 0 0 2px #333, 0 0 1px #333;
}

.toolbar {
  flex: none;
  height: 36px;
  padding: 0 14px;
  display: flex;
  align-items: center;
  gap: 12px;
}
.nav svg { width: 16px; height: 16px; }
.omnibox {
  flex: 1;
  min-width: 0;
  height: 28px;
  margin-left: -2px;
  padding: 0 6px 0 8px;
  display: flex;
  align-items: center;
  border: 1px solid #a9a9a9;
  border-radius: 3px;
  background: #fff;
}
.lock { flex: none; width: 9px; height: 12px; margin-right: 8px; }
.secure {
  padding-right: 8px;
  margin-right: 9px;
  border-right: 1px solid #aaa;
  color: #0b8043;
  line-height: 16px;
}
.url {
  flex: 1;
  min-width: 0;
  margin-right: 12px;
  overflow: hidden;
  white-space: nowrap;
  color: #808080;
  font-size: 13px;
}
.url b { font-weight: 400; color: #111; }
.url .scheme { color: #0b8043; }
.extensions { display: flex; gap: 16px; margin-left: -4px; }
.extensions button { position: relative; }
.extensions svg { width: 16px; height: 16px; }
.count {
  position: absolute;
  top: 10px;
  left: 6px;
  width: 16px;
  height: 12px;
  border-radius: 1px;
  background: #0bd04a;
  color: #fff;
  font-size: 11px;
  line-height: 12px;
  text-align: center;
}
.menu { margin-left: 2px; }

.bookmarks {
  flex: none;
  height: 32px;
  padding: 0 14px 4px 13px;
  display: flex;
  align-items: center;
  gap: 20px;
  border-bottom: 1px solid #b6b6b6;
}
.bookmarks a { flex: none; display: flex; align-items: center; gap: 8px; }
.bookmarks span {
  width: 114px;
  overflow: hidden;
  white-space: nowrap;
  -webkit-mask-image: linear-gradient(90deg, #000 75%, transparent);
  mask-image: linear-gradient(90deg, #000 75%, transparent);
}
.bookmarks .apps { width: 36px; -webkit-mask-image: none; mask-image: none; }
.fv {
  background: #3f7fdc;
  color: #fff;
  font-size: 9px;
  font-style: normal;
  font-weight: 700;
  line-height: 16px;
  text-align: center;
}
.more { margin-left: auto; font-size: 17px; color: #444; }

/* Document */
.page {
  flex: 1;
  min-height: 0;
  padding: 8px;
  background: #fff;
  color: #000;
  font-family: "Liberation Serif", serif;
  font-size: 16px;
  text-align: center;
}
.page h1 { margin: 0 0 21px; font-size: 32px; line-height: 37px; }
.page hr { margin: 0 0 8px; }
.page p { margin: 0; line-height: 18px; }

/* Downloads */
.downloads {
  flex: none;
  height: 49px;
  padding-right: 12px;
  display: flex;
  align-items: center;
  border-top: 1px solid #ccc;
  font-size: 15px;
}
.download {
  width: 227px;
  height: 36px;
  margin: 0;
  padding: 0 17px;
  display: flex;
  align-items: center;
  border-right: 1px solid #c4c4c4;
}
.download:first-child { width: 231px; padding-left: 21px; }
.download .icon { margin-right: 12px; }
.download span { white-space: nowrap; }
.caret { width: 12px; height: 12px; margin-left: auto; }
.showall {
  width: 90px;
  height: 30px;
  margin-left: auto;
  margin-right: 12px;
  border: 1px solid #777;
  border-radius: 3px;
  background: #fff;
  font-size: 14px;
  font-weight: 600;
}
.dismiss svg { width: 12px; height: 12px; }
```
